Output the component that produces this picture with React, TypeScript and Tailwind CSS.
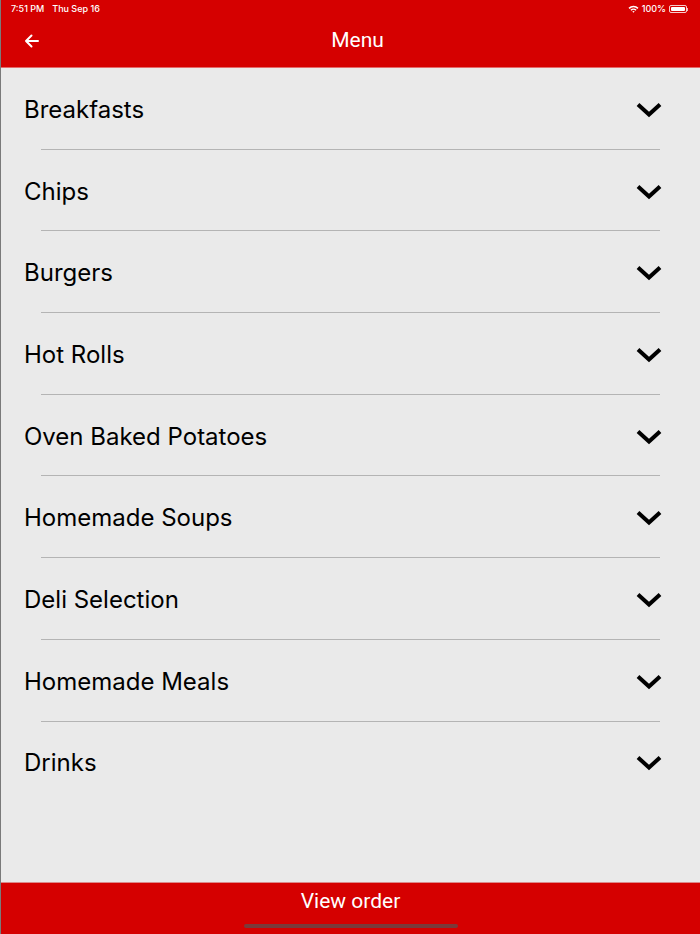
import React from "react";

const items = [
  "Breakfasts",
  "Chips",
  "Burgers",
  "Hot Rolls",
  "Oven Baked Potatoes",
  "Homemade Soups",
  "Deli Selection",
  "Homemade Meals",
  "Drinks",
];

function Chevron() {
  return (
    <svg width="28" height="18" viewBox="0 0 28 18" fill="none">
      <path d="M3 3.5 L14 13.5 L25 3.5" stroke="#000" strokeWidth="4" strokeLinecap="butt" strokeLinejoin="miter" />
    </svg>
  );
}

export default function App() {
  return (
    <div
      className="w-[700px] h-[934px] flex flex-col bg-[#eaeaea] overflow-hidden border-l border-[#7a7a7a]"
      style={{ fontFamily: "Inter, 'Noto Sans', sans-serif" }}
    >
      <div className="bg-[#d50000] text-white flex flex-col">
        <div className="h-[18px] flex items-center justify-between pl-[10px] pr-[12px] text-[9px] font-medium">
          <div className="flex gap-[8px]">
            <span>7:51 PM</span>
            <span>Thu Sep 16</span>
          </div>
          <div className="flex items-center gap-[3px]">
            <svg width="11" height="8" viewBox="0 0 11 8">
              <path d="M0.5 2.8 A7 7 0 0 1 10.5 2.8 L9.4 3.9 A5.4 5.4 0 0 0 1.6 3.9 Z" fill="#fff" />
              <path d="M2.4 4.7 A4.4 4.4 0 0 1 8.6 4.7 L7.5 5.8 A2.8 2.8 0 0 0 3.5 5.8 Z" fill="#fff" />
              <path d="M4.3 6.6 A1.7 1.7 0 0 1 6.7 6.6 L5.5 7.8 Z" fill="#fff" />
            </svg>
            <span>100%</span>
            <div className="flex items-center">
              <div className="w-[18px] h-[8px] rounded-[2px] border border-white/80 p-[1px]">
                <div className="w-full h-full bg-white rounded-[1px]" />
              </div>
              <div className="w-[1px] h-[3px] bg-white/70" />
            </div>
          </div>
        </div>
        <div className="h-[50px] flex items-center pb-[3px] border-b border-[#e46a6a]">
          <div className="w-[60px] flex justify-center pl-[2px]">
            <svg width="16" height="14" viewBox="0 0 16 14" fill="none">
              <path d="M14 7 H2 M7.5 1.5 L2 7 L7.5 12.5" stroke="#fff" strokeWidth="2" strokeLinecap="round" strokeLinejoin="round" />
            </svg>
          </div>
          <div className="flex-1 text-center text-[21px] pr-[46px]" style={{ fontFamily: "Roboto, sans-serif" }}>
            Menu
          </div>
        </div>
      </div>

      <div className="flex-1 flex flex-col">
        {items.map((name, i) => (
          <div key={name} className="flex flex-col">
            <div className="h-[80.7px] flex items-center justify-between pl-[23px] pr-[37px] pt-[3px]">
              <span className="text-[24px] text-black">{name}</span>
              <Chevron />
            </div>
            {i < items.length - 1 && <div className="h-[1px] bg-[#b4b4b4] mx-[40px]" />}
          </div>
        ))}
      </div>

      <div className="h-[52px] bg-[#d50000] border-t border-[#dc8a8a] flex flex-col items-center">
        <div className="h-[38px] flex items-center text-white text-[21px]" style={{ fontFamily: "Roboto, sans-serif" }}>
          View order
        </div>
        <div className="mt-[3px] w-[214px] h-[4px] rounded-full bg-[#7a3a3a]" />
      </div>
    </div>
  );
}
